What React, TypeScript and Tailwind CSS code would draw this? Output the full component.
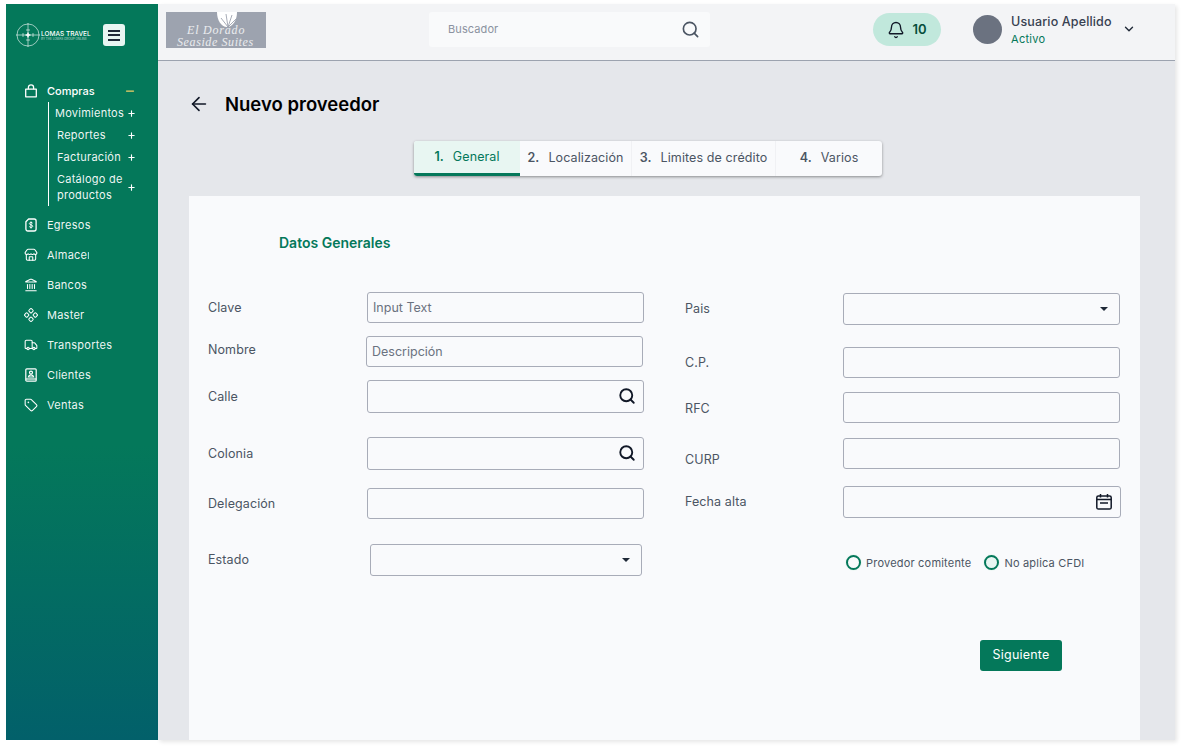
import { ArrowLeft, Bell, ChevronDown, Landmark, Minus, Plus, Search, Store, Tag, Truck } from 'lucide-react';
import type { ReactNode } from 'react';

const font = "font-['Inter',sans-serif]";

/* Iconos dibujados a mano, no existen igual en lucide */
const BagIcon = () => (
  <svg width="14" height="14" viewBox="0 0 14 14" fill="none" stroke="white" strokeWidth="1.3">
    <path d="M1.7 5.2h10.6v7.6H1.7z" strokeLinejoin="round" />
    <path d="M4.4 5.2V3.4a2.6 2.6 0 0 1 5.2 0v1.8" />
  </svg>
);

const MoneyFileIcon = () => (
  <svg width="14" height="14" viewBox="0 0 14 14" fill="none" stroke="white" strokeWidth="1.3">
    <path d="M4.6 1h5.6c1 0 1.9.9 1.9 1.9v8.2c0 1-.9 1.9-1.9 1.9H3.8c-1 0-1.9-.9-1.9-1.9V3.7z" strokeLinejoin="round" />
    <path d="M8.6 5.2c-.3-.6-.9-.8-1.6-.8-.9 0-1.6.4-1.6 1.2 0 1.7 3.3.8 3.3 2.6 0 .8-.7 1.2-1.7 1.2-.7 0-1.4-.3-1.7-.9M7 3.5v7" strokeWidth="1" />
  </svg>
);

const MasterIcon = () => (
  <svg width="14" height="14" viewBox="0 0 14 14" fill="none" stroke="white" strokeWidth="1">
    <rect x="5.2" y="0.9" width="3.6" height="3.6" rx="1" transform="rotate(45 7 2.7)" />
    <rect x="5.2" y="9.5" width="3.6" height="3.6" rx="1" transform="rotate(45 7 11.3)" />
    <rect x="0.9" y="5.2" width="3.6" height="3.6" rx="1" transform="rotate(45 2.7 7)" />
    <rect x="9.5" y="5.2" width="3.6" height="3.6" rx="1" transform="rotate(45 11.3 7)" />
  </svg>
);

const ContactBookIcon = () => (
  <svg width="14" height="14" viewBox="0 0 14 14" fill="none" stroke="white" strokeWidth="1.2">
    <rect x="1.8" y="0.8" width="10.4" height="12.4" rx="1" />
    <path d="M1.8 11h10.4" />
    <circle cx="7" cy="4.6" r="1.5" />
    <path d="M4.3 9c.3-1.5 1.4-2.1 2.7-2.1s2.4.6 2.7 2.1z" />
  </svg>
);

const CalendarIcon = () => (
  <svg width="18" height="18" viewBox="0 0 18 18" fill="none" stroke="#111827" strokeWidth="1.5">
    <rect x="1.8" y="3" width="14.4" height="13" rx="1.6" />
    <path d="M5.5 1v3.4M12.5 1v3.4M1.8 6.6h14.4M5 10h8" />
  </svg>
);

const LomasLogo = () => (
  <svg width="24" height="24" viewBox="0 0 24 24" fill="none" stroke="white" strokeWidth="0.6">
    <circle cx="12" cy="12" r="11" />
    <path d="M12 0v24M0 12h24M7 10v4M17 10v4M10 7h4M10 17h4" />
    <path d="M12 9.5l.7 1.8 1.8.7-1.8.7-.7 1.8-.7-1.8-1.8-.7 1.8-.7z" fill="white" />
  </svg>
);

const PalmIcon = () => (
  <svg width="20" height="15" viewBox="0 0 20 15" className="shrink-0">
    <path d="M0 0h20c0 8-4 15-10 15S0 8 0 0z" fill="white" />
    <path d="M11 15L9 2M11 15l4-12M11 15l8-8M11 15L4 6" stroke="#9da3af" strokeWidth="0.9" fill="none" />
  </svg>
);

/* Subitem del menu Compras */
const SubItem = ({ label, pl = 'pl-[8px]', h = 'h-[22px]' }: { label: ReactNode; pl?: string; h?: string }) => (
  <div className={`flex items-center justify-between pr-[22px] ${h} ${pl}`}>
    <span className="text-[11px] leading-[16px] tracking-[0.25px] whitespace-nowrap text-white/95">{label}</span>
    <Plus size={9} strokeWidth={3} className="shrink-0 text-white" />
  </div>
);

const NavItem = ({ icon, children }: { icon: ReactNode; children: ReactNode }) => (
  <div className="flex h-[30px] items-center pl-[18px]">
    <span className="flex w-[23px] shrink-0">{icon}</span>
    <span className="text-[11px] tracking-[0.25px] text-white/95">{children}</span>
  </div>
);

const Sidebar = () => (
  <aside className="flex h-[736px] w-[152px] shrink-0 flex-col bg-[linear-gradient(180deg,#04785a_0%,#04785a_60%,#02606a_100%)]">
    <div className="flex h-[62px] items-center pl-[10px]">
      <div className="flex items-center">
        <LomasLogo />
        <div className="ml-[1px] flex w-[50px] flex-col">
          <span className="text-[6.5px] leading-[8px] font-medium whitespace-nowrap text-white">LOMAS TRAVEL</span>
          <span className="text-[3px] leading-[3px] whitespace-nowrap text-white/70">BY THE LOMAS GROUP ONLINE</span>
        </div>
      </div>
      <div className="ml-[12px] flex h-[22px] w-[22px] flex-col items-center justify-center gap-[2.5px] rounded-[3px] bg-[#e8f6f2]">
        <span className="h-[2px] w-[12px] bg-[#1f2937]" />
        <span className="h-[2px] w-[12px] bg-[#1f2937]" />
        <span className="h-[2px] w-[12px] bg-[#1f2937]" />
      </div>
    </div>

    <div className="mt-[19px] flex h-[12px] items-center pl-[18px]">
      <span className="flex w-[23px] shrink-0"><BagIcon /></span>
      <span className="flex-1 text-[11px] font-medium text-white">Compras</span>
      <Minus size={12} strokeWidth={2.5} className="mr-[22px] text-[#f2cf66]" />
    </div>
    <div className="mt-[5px] ml-[42px] flex w-[110px] flex-col border-l-[1.5px] border-white">
      <SubItem label="Movimientos" pl="pl-[6px]" />
      <SubItem label="Reportes" />
      <SubItem label="Facturación" />
      <SubItem h="h-[38px]" label={<>Catálogo de<br />productos</>} />
    </div>

    <div className="mt-[4px] flex flex-col">
      <NavItem icon={<MoneyFileIcon />}>Egresos</NavItem>
      <NavItem icon={<Store size={14} color="white" strokeWidth={1.8} />}>
        <span className="block w-[42px] overflow-hidden whitespace-nowrap">Almacen</span>
      </NavItem>
      <NavItem icon={<Landmark size={14} color="white" strokeWidth={1.8} />}>Bancos</NavItem>
      <NavItem icon={<MasterIcon />}>Master</NavItem>
      <NavItem icon={<Truck size={14} color="white" strokeWidth={1.8} />}>Transportes</NavItem>
      <NavItem icon={<ContactBookIcon />}>Clientes</NavItem>
      <NavItem icon={<Tag size={14} color="white" strokeWidth={1.8} />}>Ventas</NavItem>
    </div>
  </aside>
);

const Header = () => (
  <header className="flex h-[57px] shrink-0 items-start border-b border-[#9ca3af] bg-[#f3f4f6]">
    <div className="mt-[8px] ml-[8px] flex h-[36px] w-[100px] flex-col overflow-hidden bg-[#9da3af]">
      <span className="ml-[51px] flex h-[12px] items-start"><PalmIcon /></span>
      <span className="ml-[21px] font-['Liberation_Serif',serif] text-[12px] leading-[12px] tracking-[0.8px] text-white/80 italic">El Dorado</span>
      <span className="ml-[11px] font-['Liberation_Serif',serif] text-[12px] leading-[12px] tracking-[0.6px] whitespace-nowrap text-white/80 italic">Seaside Suites</span>
    </div>
    <div className="mt-[8px] ml-[163px] flex h-[35px] w-[281px] items-center justify-between rounded-[3px] bg-[#f9fafb] pr-[10px] pl-[19px]">
      <span className="text-[11px] tracking-[0.1px] text-[#8b92a0]">Buscador</span>
      <Search size={19} strokeWidth={2.1} className="text-[#4b5563]" />
    </div>
    <div className="mt-[9px] ml-[163px] flex h-[33px] w-[68px] items-center justify-center gap-[7px] rounded-full bg-[#c1e8dc]">
      <Bell size={18} strokeWidth={1.8} className="text-[#111827]" />
      <span className="text-[13px] font-semibold text-[#064e3b]">10</span>
    </div>
    <div className="mt-[11px] ml-[32px] h-[29px] w-[29px] rounded-full bg-[#6b7280]" />
    <div className="mt-[9px] ml-[9px] flex w-[111px] flex-col">
      <span className="text-[12.5px] leading-[18px] font-medium tracking-[0.15px] text-[#374151]">Usuario Apellido</span>
      <span className="text-[11px] leading-[16px] tracking-[0.3px] text-[#04785a]">Activo</span>
    </div>
    <ChevronDown size={14} strokeWidth={2.4} className="mt-[18px] text-[#1f2937]" />
  </header>
);

const Tab = ({ n, label, w, active, divider }: { n: string; label: string; w: string; active?: boolean; divider?: boolean }) => (
  <div className={`flex items-center justify-center gap-[9px] text-[12.5px] tracking-[0.1px] ${w} ${active ? 'border-b-[3px] border-[#04785a] bg-[#e8f6f2] text-[#04785a]' : 'text-[#4b5563]'} ${divider ? 'border-r border-[#f0f1f4]' : ''}`}>
    <span className="font-semibold">{n}</span>
    <span>{label}</span>
  </div>
);

const Tabs = () => (
  <div className="mt-[25px] ml-[256px] flex h-[35px] w-[468px] overflow-hidden rounded-[3px] bg-[#f9fafc] shadow-[0_1px_3px_rgba(0,0,0,0.4)]">
    <Tab n="1." label="General" w="w-[106px]" active />
    <Tab n="2." label="Localización" w="w-[112px]" divider />
    <Tab n="3." label="Limites de crédito" w="w-[144px]" divider />
    <Tab n="4." label="Varios" w="w-[106px]" />
  </div>
);

const Label = ({ children, w = 'w-[159px]', className = '' }: { children: ReactNode; w?: string; className?: string }) => (
  <span className={`shrink-0 text-[12.5px] tracking-[0.1px] text-[#4b5563] ${w} ${className}`}>{children}</span>
);

const Field = ({ h = 'h-[31px]', w = 'w-[277px]', placeholder, icon }: { h?: string; w?: string; placeholder?: string; icon?: ReactNode }) => (
  <div className={`flex items-center justify-between rounded-[3px] border border-[#a8acb8] pr-[7px] pl-[5px] ${h} ${w}`}>
    <span className="mt-[2px] text-[12.5px] text-[#6b7280]">{placeholder}</span>
    {icon}
  </div>
);

const Caret = () => <span className="mr-[4px] h-0 w-0 border-x-[4px] border-t-[4px] border-x-transparent border-t-[#1f2937]" />;
const SearchIcon = () => <Search size={18} strokeWidth={2.5} className="text-[#111827]" />;

const Radio = ({ label, filled }: { label: string; filled?: boolean }) => (
  <div className="flex items-center gap-[5px]">
    <span className={`h-[15px] w-[15px] rounded-full border-2 border-[#04785a] ring-1 ring-[#eef7f4] ${filled ? 'bg-[#e8f6f2]' : ''}`} />
    <span className="text-[11px] tracking-[0.2px] text-[#4b5563]">{label}</span>
  </div>
);

const Form = () => (
  <section className="mt-[20px] ml-[31px] h-[545px] w-[951px] bg-[#f9fafc] pl-[19px]">
    <h2 className="pt-[38px] pl-[71px] text-[14px] leading-[17px] font-semibold text-[#04785a]">Datos Generales</h2>
    <div className="mt-[41px] flex">
      {/* Columna izquierda */}
      <div className="flex w-[477px] flex-col">
        <div className="flex items-center"><Label className="mt-[2px]">Clave</Label><Field placeholder="Input Text" /></div>
        <div className="mt-[13px] flex items-center"><Label w="w-[158px]" className="mb-[2px]">Nombre</Label><Field placeholder="Descripción" /></div>
        <div className="mt-[13px] flex items-center"><Label className="mt-[2px]">Calle</Label><Field h="h-[33px]" icon={<SearchIcon />} /></div>
        <div className="mt-[24px] flex items-center"><Label className="mt-[2px]">Colonia</Label><Field h="h-[33px]" icon={<SearchIcon />} /></div>
        <div className="mt-[18px] flex items-center"><Label className="mt-[2px]">Delegación</Label><Field /></div>
        <div className="mt-[25px] flex items-center"><Label w="w-[162px]" className="mt-[1px]">Estado</Label><Field h="h-[32px]" w="w-[272px]" icon={<Caret />} /></div>
      </div>
      {/* Columna derecha */}
      <div className="mt-[1px] flex flex-col">
        <div className="flex items-center"><Label w="w-[158px]">Pais</Label><Field h="h-[32px]" icon={<Caret />} /></div>
        <div className="mt-[22px] flex items-center"><Label w="w-[158px]" className="mt-[2px]">C.P.</Label><Field /></div>
        <div className="mt-[14px] flex items-center"><Label w="w-[158px]" className="mt-[4px]">RFC</Label><Field /></div>
        <div className="mt-[14px] flex items-center"><Label w="w-[158px]" className="mt-[14px]">CURP</Label><Field /></div>
        <div className="mt-[16px] flex items-center"><Label w="w-[158px]" className="mt-[2px]">Fecha alta</Label><Field h="h-[32px]" w="w-[278px]" icon={<CalendarIcon />} /></div>
        <div className="mt-[37px] ml-[161px] flex gap-[13px]">
          <Radio label="Provedor comitente" />
          <Radio label="No aplica CFDI" filled />
        </div>
        <button className="mt-[69px] ml-[295px] h-[31px] w-[82px] rounded-[3px] bg-[#04785a] text-[12.5px] tracking-[0.2px] text-white">Siguiente</button>
      </div>
    </div>
  </section>
);

export default function App() {
  return (
    <div className={`flex h-[747px] w-[1181px] overflow-hidden bg-white pt-[4px] pl-[6px] ${font}`}>
      <Sidebar />
      <div className="flex h-[736px] w-[1017px] flex-col bg-[#e5e7eb] shadow-[2px_2px_4px_rgba(0,0,0,0.1)]">
        <Header />
        <div className="mt-[31px] ml-[30px] flex items-center">
          <ArrowLeft size={22} strokeWidth={1.8} className="text-[#111827]" />
          <h1 className="ml-[15px] text-[18.5px] leading-[24px] font-semibold text-black">Nuevo proveedor</h1>
        </div>
        <Tabs />
        <Form />
      </div>
    </div>
  );
}
